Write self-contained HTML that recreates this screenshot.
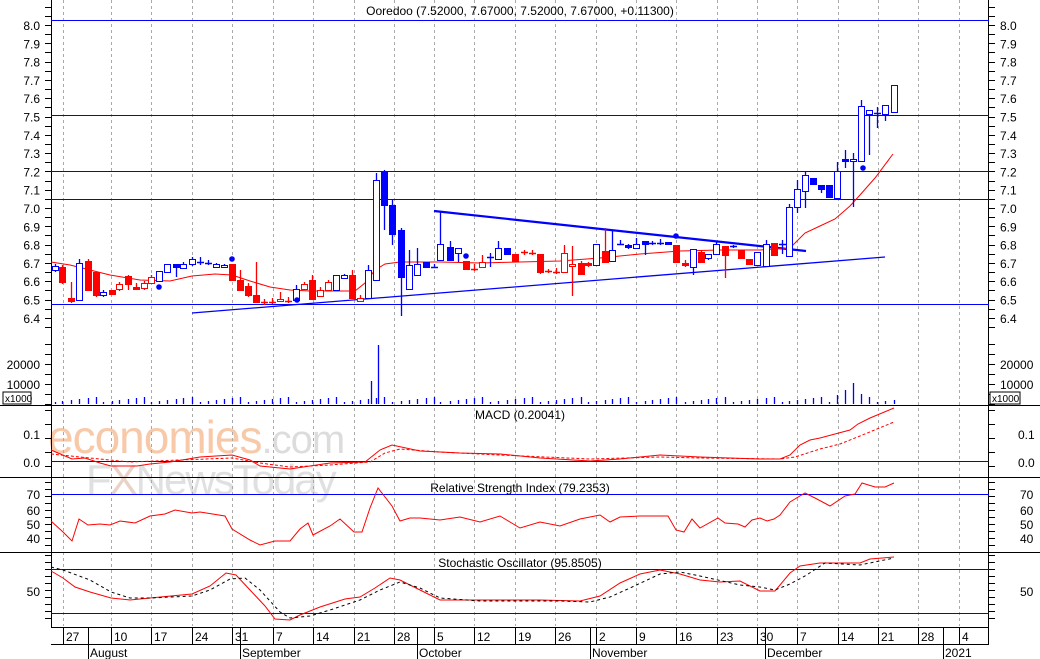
<!DOCTYPE html><html><head><meta charset="utf-8"><style>
html,body{margin:0;padding:0;background:#fff;}
svg{display:block;font-family:"Liberation Sans",Arial,sans-serif;}
</style></head><body>
<svg id="s" width="1040" height="659" viewBox="0 0 1040 659" xmlns="http://www.w3.org/2000/svg">
<rect width="1040" height="659" fill="#fff"/>
<g id="wm" font-family="Liberation Sans, sans-serif">
<text x="48" y="453" font-size="46" fill="#f7c9a8" letter-spacing="-1">economies<tspan fill="#dcdcdc" font-size="40">.com</tspan></text>
<text x="86" y="494" font-size="42" fill="#e0e0e0" letter-spacing="-2">F<tspan fill="#e8d3c8">X</tspan>NewsToday</text>
</g>
<g id="g"></g>
<text x="520" y="15" font-size="12" text-anchor="middle" fill="#000">Ooredoo (7.52000, 7.67000, 7.52000, 7.67000, +0.11300)</text>
<text x="520" y="419" font-size="12" text-anchor="middle" fill="#000">MACD (0.20041)</text>
<text x="520" y="492" font-size="12" text-anchor="middle" fill="#000">Relative Strength Index (79.2353)</text>
<text x="520" y="567" font-size="12" text-anchor="middle" fill="#000">Stochastic Oscillator (95.8505)</text>
</svg>
<script>
var S=document.getElementById('g'),NS='http://www.w3.org/2000/svg';
function el(t,a,txt){var e=document.createElementNS(NS,t);for(var k in a)e.setAttribute(k,a[k]);if(txt!=null)e.textContent=txt;S.appendChild(e);return e;}
function ln(x1,y1,x2,y2,c,w,d){var a={x1:x1,y1:y1,x2:x2,y2:y2,stroke:c,'stroke-width':w||1};if(d)a['stroke-dasharray']=d;return el('line',a);}
function pl(pts,c,w,d){var a={points:pts.map(function(p){return p.join(',')}).join(' '),fill:'none',stroke:c,'stroke-width':w||1};if(d)a['stroke-dasharray']=d;el('polyline',a);}
function tx(x,y,s,anc,sz){el('text',{x:x,y:y,'font-size':sz||12,'text-anchor':anc||'start',fill:'#000'},s);}
// grid
var gx=[63,111,151,192,232,273,313,354,394,434,474,515,555,596,636,676,717,757,797,838,878,918,959];
gx.forEach(function(x){ln(x+.5,0,x+.5,626,'#aaa',1,'3,3');});
// axes
ln(51.5,0,51.5,627,'#000');ln(988.5,0,988.5,644,'#000');
[405,477,552].forEach(function(y){ln(0,y+.5,1040,y+.5,'#000');});
ln(51,627.5,989,627.5,'#000');ln(51,644.5,989,644.5,'#000');
// price axis
function py(p){return 25+(8-p)*183;}
for(var p=6.35;p<=8.11;p+=0.05){var y=Math.round(py(p))+.5;ln(45,y,51,y,'#000');ln(989,y,995,y,'#000');}
for(var i=0;i<=16;i++){var p=6.4+i*0.1,y=py(p)+5;tx(40,y,p.toFixed(1),'end');tx(1000,y,p.toFixed(1));}
// horizontal lines
[20,115,171,199,304].forEach(function(y){ln(51,y+.5,989,y+.5,'#00f');});
// volume axis
[[364,'20000'],[384,'10000']].forEach(function(a){tx(40,a[0]+5,a[1],'end');tx(1000,a[0]+5,a[1]);});
for(var y=344;y<=404;y+=10){ln(45,y+.5,51,y+.5,'#000');ln(989,y+.5,995,y+.5,'#000');}
el('rect',{x:3,y:392,width:28,height:12,fill:'#fff',stroke:'#000'});tx(5,402,'x1000','start',10);
el('rect',{x:990,y:392,width:30,height:12,fill:'#fff',stroke:'#000'});tx(992,402,'x1000','start',10);
// candles [x,top,bot,high,low,color,filled]
var C=[[55,266,270,264,272,'b',0],[62,267,282,265,284,'r',1],[71,298,301,282,303,'r',1],[79,263,300,259,300,'b',0],[88,261,290,259,290,'r',1],[96,272,295,272,297,'r',1],[103,292,295,290,297,'b',0],[112,290,294,290,294,'r',1],[119,284,289,282,291,'r',0],[128,276,284,275,290,'r',1],[136,287,289,283,289,'r',1],[144,283,288,281,290,'r',0],[151,277,283,275,284,'r',0],[159,271,281,271,282,'b',0],[167,264,272,264,272,'b',0],[176,264,267,264,277,'b',1],[183,264,268,262,268,'b',0],[192,259,264,257,266,'b',0],[200,262,262,257,265,'b',0],[208,263,263,260,265,'b',0],[216,264,267,263,267,'b',0],[224,265,267,264,268,'b',0],[232,264,280,264,280,'r',1],[240,280,290,270,290,'r',1],[248,286,295,283,297,'r',1],[256,295,302,262,303,'r',1],[264,302,302,299,305,'r',1],[272,302,302,298,304,'r',1],[280,299,301,292,302,'r',0],[288,301,301,297,303,'r',1],[296,289,300,285,300,'b',0],[304,284,289,282,290,'r',0],[312,280,299,275,299,'r',1],[320,290,296,287,297,'r',0],[328,282,290,280,291,'r',0],[336,275,290,275,291,'b',0],[344,275,278,274,279,'b',0],[352,275,298,270,298,'r',1],[360,298,301,295,302,'r',0],[368,270,298,265,298,'b',0],[376,180,280,173,280,'b',0],[384,172,205,170,230,'b',1],[392,205,234,200,245,'b',1],[401,230,277,228,316,'b',1],[409,265,289,250,290,'b',0],[417,264,275,248,276,'b',0],[426,262,267,262,268,'b',1],[434,267,267,264,268,'b',0],[440,244,260,212,261,'b',0],[450,247,260,241,260,'b',1],[458,248,253,248,262,'b',0],[466,261,269,261,270,'r',1],[474,269,270,264,271,'r',0],[482,262,267,255,268,'r',0],[490,257,257,253,267,'b',0],[498,248,259,241,260,'b',0],[507,248,254,248,255,'b',1],[515,254,261,254,262,'r',1],[524,252,252,250,255,'r',1],[532,253,253,250,255,'r',1],[540,254,272,254,274,'r',1],[548,271,271,269,273,'r',1],[556,272,272,268,274,'r',1],[564,253,272,245,273,'r',0],[572,264,266,246,296,'r',0],[581,263,274,261,274,'r',1],[588,263,265,262,267,'r',1],[596,244,265,244,266,'b',0],[605,251,262,228,263,'r',1],[612,250,261,230,262,'b',0],[620,244,244,240,245,'b',0],[628,245,247,244,249,'b',1],[636,244,248,238,248,'b',0],[645,241,244,241,255,'b',1],[652,243,243,241,245,'b',0],[660,243,243,239,245,'b',0],[668,242,244,242,245,'b',1],[676,245,262,245,262,'r',1],[685,263,265,260,267,'r',1],[693,249,267,249,275,'b',0],[701,252,262,250,262,'r',1],[708,254,258,254,260,'b',0],[716,244,254,242,255,'b',0],[725,246,255,246,278,'r',1],[733,246,247,245,248,'b',1],[741,250,258,250,258,'r',1],[749,259,264,259,264,'r',1],[757,252,265,252,266,'b',0],[766,244,266,240,266,'b',0],[774,243,255,243,255,'r',1],[782,244,244,240,254,'b',0],[789,207,256,204,256,'b',0],[797,189,207,180,213,'b',0],[805,175,191,172,208,'b',0],[813,178,184,178,185,'b',1],[821,185,189,185,193,'b',1],[829,185,197,185,198,'b',1],[837,171,198,162,198,'b',0],[845,159,161,150,168,'b',1],[853,159,161,153,207,'b',0],[861,106,161,100,161,'b',0],[869,110,114,110,155,'b',0],[877,113,113,107,128,'b',0],[885,105,114,105,121,'b',0],[894,85,112,85,112,'b',0]];
// trendlines
ln(192,313,885,257,'#00f',1.3);ln(434,211,806,251,'#00f',2.2);
// MA
pl([[51,262],[70,265],[90,270],[110,275],[140,280],[170,281],[192,276],[215,274],[232,275],[250,281],[270,287],[290,290],[310,291],[330,291],[355,291],[365,283],[375,270],[385,264],[400,262],[440,262],[480,263],[520,262],[560,261],[600,258],[640,254],[680,251],[720,250],[760,250],[790,248],[805,233],[820,226],[835,219],[850,206],[860,195],[875,178],[893,154]],'#f00',1);
C.forEach(function(c){var col=c[5]=='b'?'#00f':'#f00';ln(c[0]+.5,c[3],c[0]+.5,c[4],col,1.3);
 var h=Math.max(c[2]-c[1],1);
 if(h<=1) ln(c[0]-3,c[1]+.5,c[0]+4,c[1]+.5,col,1.5);
 else el('rect',{x:c[0]-2.5,y:c[1]+.5,width:6,height:h,fill:c[6]?col:'#fff',stroke:col,'stroke-width':1});});
[[159,287],[232,259],[297,300],[466,256],[676,236],[863,168]].forEach(function(d){el('circle',{cx:d[0],cy:d[1],r:2.8,fill:'#00f'});});
// volume
var big={371:381,378:345,385:383,853:383,845:390,795:393,861:394,837:395,804:395};
C.forEach(function(c,i){var t=big[c[0]]||(404-(2+((i*7)%6)));ln(c[0]+.5,t,c[0]+.5,404,'#00f',1.3);});
ln(371.5,381,371.5,404,'#00f',1.3);ln(378.5,345,378.5,404,'#00f',1.3);
// MACD
ln(51,461.5,989,461.5,'#00f');
[[434,0.1],[462,0]].forEach(function(a){tx(40,a[0]+5,a[1].toFixed(1),'end');tx(1018,a[0]+5,a[1].toFixed(1),'start');});
for(var y=410;y<=475;y+=14){ln(45,y+.5,51,y+.5,'#000');ln(989,y+.5,995,y+.5,'#000');}
pl([[51,450],[72,459],[85,458],[100,463],[111,466],[137,466],[150,464],[170,462],[200,457],[232,455],[250,460],[260,466],[290,469],[330,463],[365,462],[380,450],[392,445],[420,451],[460,453],[500,454],[540,458],[590,461],[620,459],[660,455],[700,457],[730,458],[760,459],[780,459],[790,455],[800,445],[810,440],[820,438],[835,434],[850,430],[858,424],[870,418],[894,408]],'#f00',1);
pl([[51,454],[80,457],[130,462],[180,460],[232,458],[260,463],[290,467],[330,465],[370,462],[385,453],[400,449],[440,452],[500,455],[590,459],[660,457],[700,458],[780,459],[795,457],[820,449],[840,444],[860,436],[894,422]],'#f00',1,'3,2');
// RSI
ln(51,494.5,989,494.5,'#00f');
[[494,70],[510,60],[524,50],[538,40]].forEach(function(a){tx(40,a[0]+5,a[1],'end');tx(1020,a[0]+5,a[1],'start');});
for(var y=482;y<=548;y+=7){ln(45,y+.5,51,y+.5,'#000');ln(989,y+.5,995,y+.5,'#000');}
pl([[51,521],[63,532],[72,541],[79,519],[88,525],[100,524],[110,525],[120,521],[135,523],[150,516],[165,514],[175,510],[192,513],[200,512],[225,516],[232,529],[250,540],[260,545],[275,541],[290,541],[300,529],[308,523],[313,535],[330,526],[340,519],[354,532],[362,532],[370,508],[378,488],[392,506],[400,521],[410,518],[420,518],[440,520],[460,517],[480,522],[500,516],[520,528],[540,522],[560,526],[580,519],[600,515],[610,522],[620,517],[640,516],[668,516],[676,530],[684,532],[692,519],[700,528],[718,518],[725,523],[738,524],[745,527],[752,520],[760,518],[767,521],[774,519],[780,515],[790,502],[805,493],[815,498],[830,506],[845,496],[855,494],[862,483],[875,487],[885,487],[894,483]],'#f00',1);
// Stoch
ln(51,569.5,989,569.5,'#00f');ln(51,613.5,989,613.5,'#00f');
tx(40,596,'50','end');tx(1020,596,'50','start');
for(var y=555;y<=622;y+=7){ln(45,y+.5,51,y+.5,'#000');ln(989,y+.5,995,y+.5,'#000');}
pl([[51,571],[63,578],[75,587],[90,592],[111,598],[130,600],[150,598],[192,594],[210,586],[226,573],[236,575],[250,590],[265,606],[275,619],[290,620],[300,615],[320,607],[345,599],[360,597],[375,588],[390,578],[400,580],[420,590],[440,600],[480,600],[540,600],[580,601],[600,596],[620,583],[640,574],[660,570],[680,574],[700,580],[720,582],[740,581],[760,591],[775,591],[790,573],[800,566],[820,563],[860,563],[870,559],[894,557]],'#f00',1);
pl([[51,567],[63,570],[90,580],[111,592],[130,598],[150,598],[192,596],[210,590],[230,579],[245,578],[260,590],[280,612],[290,618],[310,616],[330,610],[360,600],[380,590],[400,582],[420,588],[440,598],[480,601],[560,601],[590,602],[610,597],[630,588],[660,574],[680,572],[700,576],[740,585],[760,587],[775,590],[790,584],[805,576],[825,563],[860,565],[894,558]],'#000',1,'3,3');
// dates
var D=[[63,'27'],[111,'10'],[151,'17'],[192,'24'],[232,'31'],[273,'7'],[313,'14'],[354,'21'],[394,'28'],[434,'5'],[474,'12'],[515,'19'],[555,'26'],[596,'2'],[636,'9'],[676,'16'],[717,'23'],[757,'30'],[797,'7'],[838,'14'],[878,'21'],[918,'28'],[959,'4']];
D.forEach(function(d){ln(d[0]+.5,627,d[0]+.5,644,'#000');tx(d[0]+3,641,d[1]);});
[[88,'August'],[240,'September'],[417,'October'],[590,'November'],[765,'December'],[943,'2021']].forEach(function(m){ln(m[0]+.5,627,m[0]+.5,659,'#000');tx(m[0]+2,657,m[1]);});
</script>
</body></html>
